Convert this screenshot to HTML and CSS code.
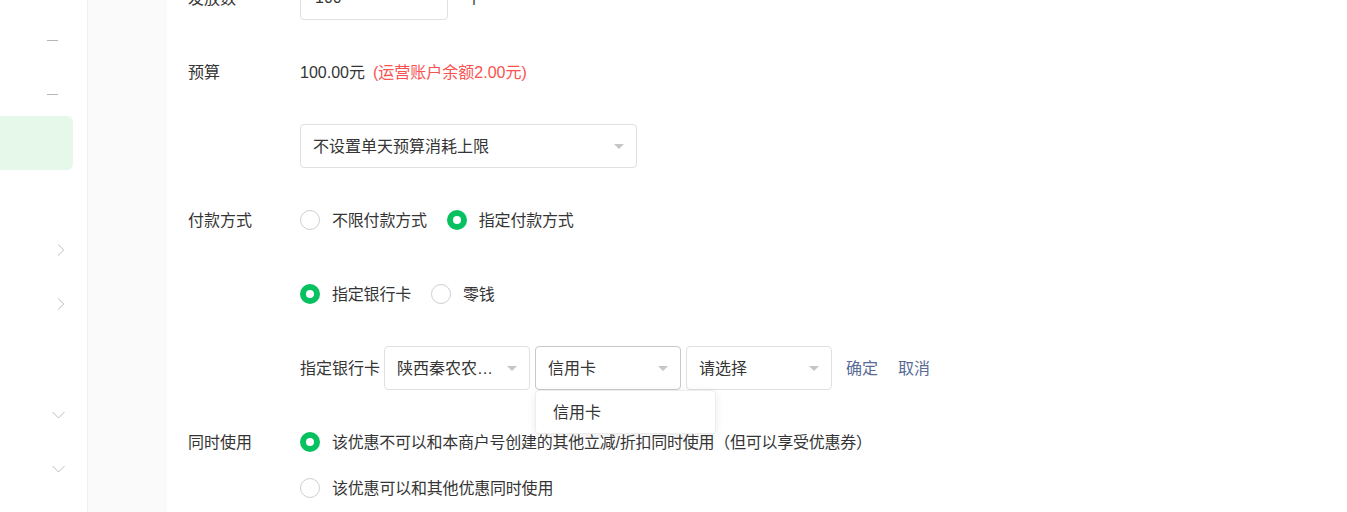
FILE: index.html
```html
<!DOCTYPE html>
<html lang="zh-CN">
<head>
<meta charset="utf-8">
<title>活动设置</title>
<link rel="stylesheet" href="styles.css">
</head>
<body>
<div class="layout">
  <aside class="sidebar">
    <div class="nav-item nav-first"><span class="dash"></span></div>
    <div class="nav-item"><span class="dash"></span></div>
    <div class="nav-item nav-active"></div>
    <div class="nav-item nav-h53"></div>
    <div class="nav-item"><svg class="chev-right" width="8" height="12" viewBox="0 0 8 12"><polyline points="1,0.5 6.8,6 1,11.5" fill="none" stroke="#bdbdbd" stroke-width="1"/></svg></div>
    <div class="nav-item"><svg class="chev-right" width="8" height="12" viewBox="0 0 8 12"><polyline points="1,0.5 6.8,6 1,11.5" fill="none" stroke="#bdbdbd" stroke-width="1"/></svg></div>
    <div class="nav-item nav-h57"></div>
    <div class="nav-item"><svg class="chev-down" width="13" height="8" viewBox="0 0 13 8"><polyline points="0.5,1 6.5,7 12.5,1" fill="none" stroke="#bdbdbd" stroke-width="1"/></svg></div>
    <div class="nav-item"><svg class="chev-down" width="13" height="8" viewBox="0 0 13 8"><polyline points="0.5,1 6.5,7 12.5,1" fill="none" stroke="#bdbdbd" stroke-width="1"/></svg></div>
  </aside>
  <div class="subnav"></div>
  <main class="main">
    <div class="form">
      <div class="row">
        <div class="label">发放数</div>
        <div class="field">
          <div class="input">100</div>
          <span class="txt unit">个</span>
        </div>
      </div>

      <div class="row">
        <div class="label">预算</div>
        <div class="field">
          <span class="txt value">100.00元</span>
          <span class="txt warn">(运营账户余额2.00元)</span>
        </div>
      </div>

      <div class="row">
        <div class="label"></div>
        <div class="field">
          <div class="select select-wide">
            <span class="select-text">不设置单天预算消耗上限</span>
            <span class="arrow"></span>
          </div>
        </div>
      </div>

      <div class="row">
        <div class="label">付款方式</div>
        <div class="field">
          <label class="radio-item"><span class="radio"></span><span class="txt">不限付款方式</span></label>
          <label class="radio-item"><span class="radio checked"></span><span class="txt">指定付款方式</span></label>
        </div>
      </div>

      <div class="row">
        <div class="label"></div>
        <div class="field">
          <label class="radio-item"><span class="radio checked"></span><span class="txt">指定银行卡</span></label>
          <label class="radio-item"><span class="radio"></span><span class="txt">零钱</span></label>
        </div>
      </div>

      <div class="row">
        <div class="label"></div>
        <div class="field bank-field">
          <span class="txt bank-label">指定银行卡</span>
          <div class="select select-small">
            <span class="select-text">陕西秦农农村商业银行</span>
            <span class="arrow"></span>
          </div>
          <div class="select select-small select-open">
            <span class="select-text">信用卡</span>
            <span class="arrow"></span>
            <div class="dropdown">
              <div class="dropdown-item">信用卡</div>
            </div>
          </div>
          <div class="select select-small">
            <span class="select-text">请选择</span>
            <span class="arrow"></span>
          </div>
          <a class="txt link link-ok">确定</a>
          <a class="txt link link-cancel">取消</a>
        </div>
      </div>

      <div class="row row-top">
        <div class="label">同时使用</div>
        <div class="field field-col">
          <label class="radio-item"><span class="radio checked"></span><span class="txt long">该优惠不可以和本商户号创建的其他立减/折扣同时使用（但可以享受优惠券）</span></label>
          <label class="radio-item"><span class="radio"></span><span class="txt">该优惠可以和其他优惠同时使用</span></label>
        </div>
      </div>
    </div>
  </main>
</div>
</body>
</html>
```

FILE: styles.css
```css
* { box-sizing: border-box; }

html, body {
  margin: 0;
  padding: 0;
  background: #fff;
}

body {
  font-family: "Liberation Sans", "Noto Sans CJK SC", sans-serif;
  font-size: 16px;
  color: #353535;
  overflow: hidden;
}

.layout {
  display: flex;
  height: 512px;
  overflow: hidden;
}

/* sidebar */
.sidebar {
  width: 87px;
  flex-shrink: 0;
  display: flex;
  flex-direction: column;
  background: #fff;
}

.nav-item {
  height: 54px;
  flex-shrink: 0;
  display: flex;
  align-items: center;
}

.nav-first { margin-top: 13px; }

.nav-active {
  width: 73px;
  margin-top: -5px;
  background: #e6f8ea;
  border-radius: 0 6px 6px 0;
}

.nav-h53 { height: 53px; }
.nav-h57 { height: 57px; }

.dash {
  display: block;
  width: 11px;
  height: 1px;
  margin-left: 47px;
  background: #b5b5b5;
}

.chev-right { margin-left: 57px; display: block; }
.chev-down { margin-left: 52px; display: block; }

.subnav {
  width: 80px;
  flex-shrink: 0;
  background: #fafafa;
  border-left: 1px solid #f0f0f0;
}

/* main */
.main {
  flex: 1;
  padding-left: 21px;
  min-width: 0;
}

.form {
  margin-top: -24px;
  display: flex;
  flex-direction: column;
  gap: 30px;
}

.row {
  display: flex;
  align-items: center;
  min-height: 44px;
}

.row-top { align-items: flex-start; }

.label {
  width: 112px;
  flex-shrink: 0;
  height: 44px;
  padding-top: 2px;
  line-height: 42px;
  color: #353535;
}

.field {
  display: flex;
  align-items: center;
  min-height: 44px;
}

.txt {
  display: block;
  height: 44px;
  padding-top: 2px;
  line-height: 42px;
  white-space: nowrap;
}

.field-col {
  flex-direction: column;
  align-items: flex-start;
  gap: 2px;
}

.input {
  width: 148px;
  height: 44px;
  border: 1px solid #e0e0e0;
  border-radius: 4px;
  padding-left: 14px;
  line-height: 42px;
}

.unit { margin-left: 18px; }

.value { color: #353535; }

.warn {
  margin-left: 8px;
  color: #fa5151;
}

/* select */
.select {
  position: relative;
  height: 44px;
  border: 1px solid #e0e0e0;
  border-radius: 4px;
  display: flex;
  align-items: center;
  padding: 0 12px 0 12px;
  background: #fff;
}

.select-wide { width: 337px; }
.select-small { width: 146px; }

.select-open {
  border-color: #c8c8c8;
}

.select-text {
  flex: 1;
  min-width: 0;
  height: 42px;
  white-space: nowrap;
  overflow: hidden;
  text-overflow: ellipsis;
  line-height: 40px;
  padding-top: 2px;
  margin-right: 10px;
}

.arrow {
  flex-shrink: 0;
  width: 0;
  height: 0;
  border-left: 5.5px solid transparent;
  border-right: 5.5px solid transparent;
  border-top: 5px solid #c6c6c6;
}

.dropdown {
  position: absolute;
  left: -1px;
  top: 43px;
  width: 181px;
  background: #fff;
  border: 1px solid #ededed;
  border-radius: 4px;
  box-shadow: 0 2px 8px rgba(0, 0, 0, 0.08);
  z-index: 10;
}

.dropdown-item {
  height: 42px;
  line-height: 40px;
  padding-top: 2px;
  padding-left: 17px;
}

.bank-field { gap: 5px; }

.bank-label { margin-right: -1px; }

.link {
  color: #576b95;
  cursor: pointer;
  text-decoration: none;
}

.link-ok { margin-left: 9px; }
.link-cancel { margin-left: 15px; }

/* radios */
.radio-item {
  display: flex;
  align-items: center;
  height: 44px;
  margin-right: 20px;
  cursor: pointer;
  letter-spacing: -0.2px;
}

.long { letter-spacing: -0.25px; }

.radio {
  width: 20px;
  height: 20px;
  border-radius: 50%;
  border: 1px solid #cfcfcf;
  margin-right: 12px;
  flex-shrink: 0;
  position: relative;
  background: #fff;
}

.radio.checked {
  border: none;
  background: #07c160;
}

.radio.checked::after {
  content: "";
  position: absolute;
  left: 6px;
  top: 6px;
  width: 8px;
  height: 8px;
  border-radius: 50%;
  background: #fff;
}
```
